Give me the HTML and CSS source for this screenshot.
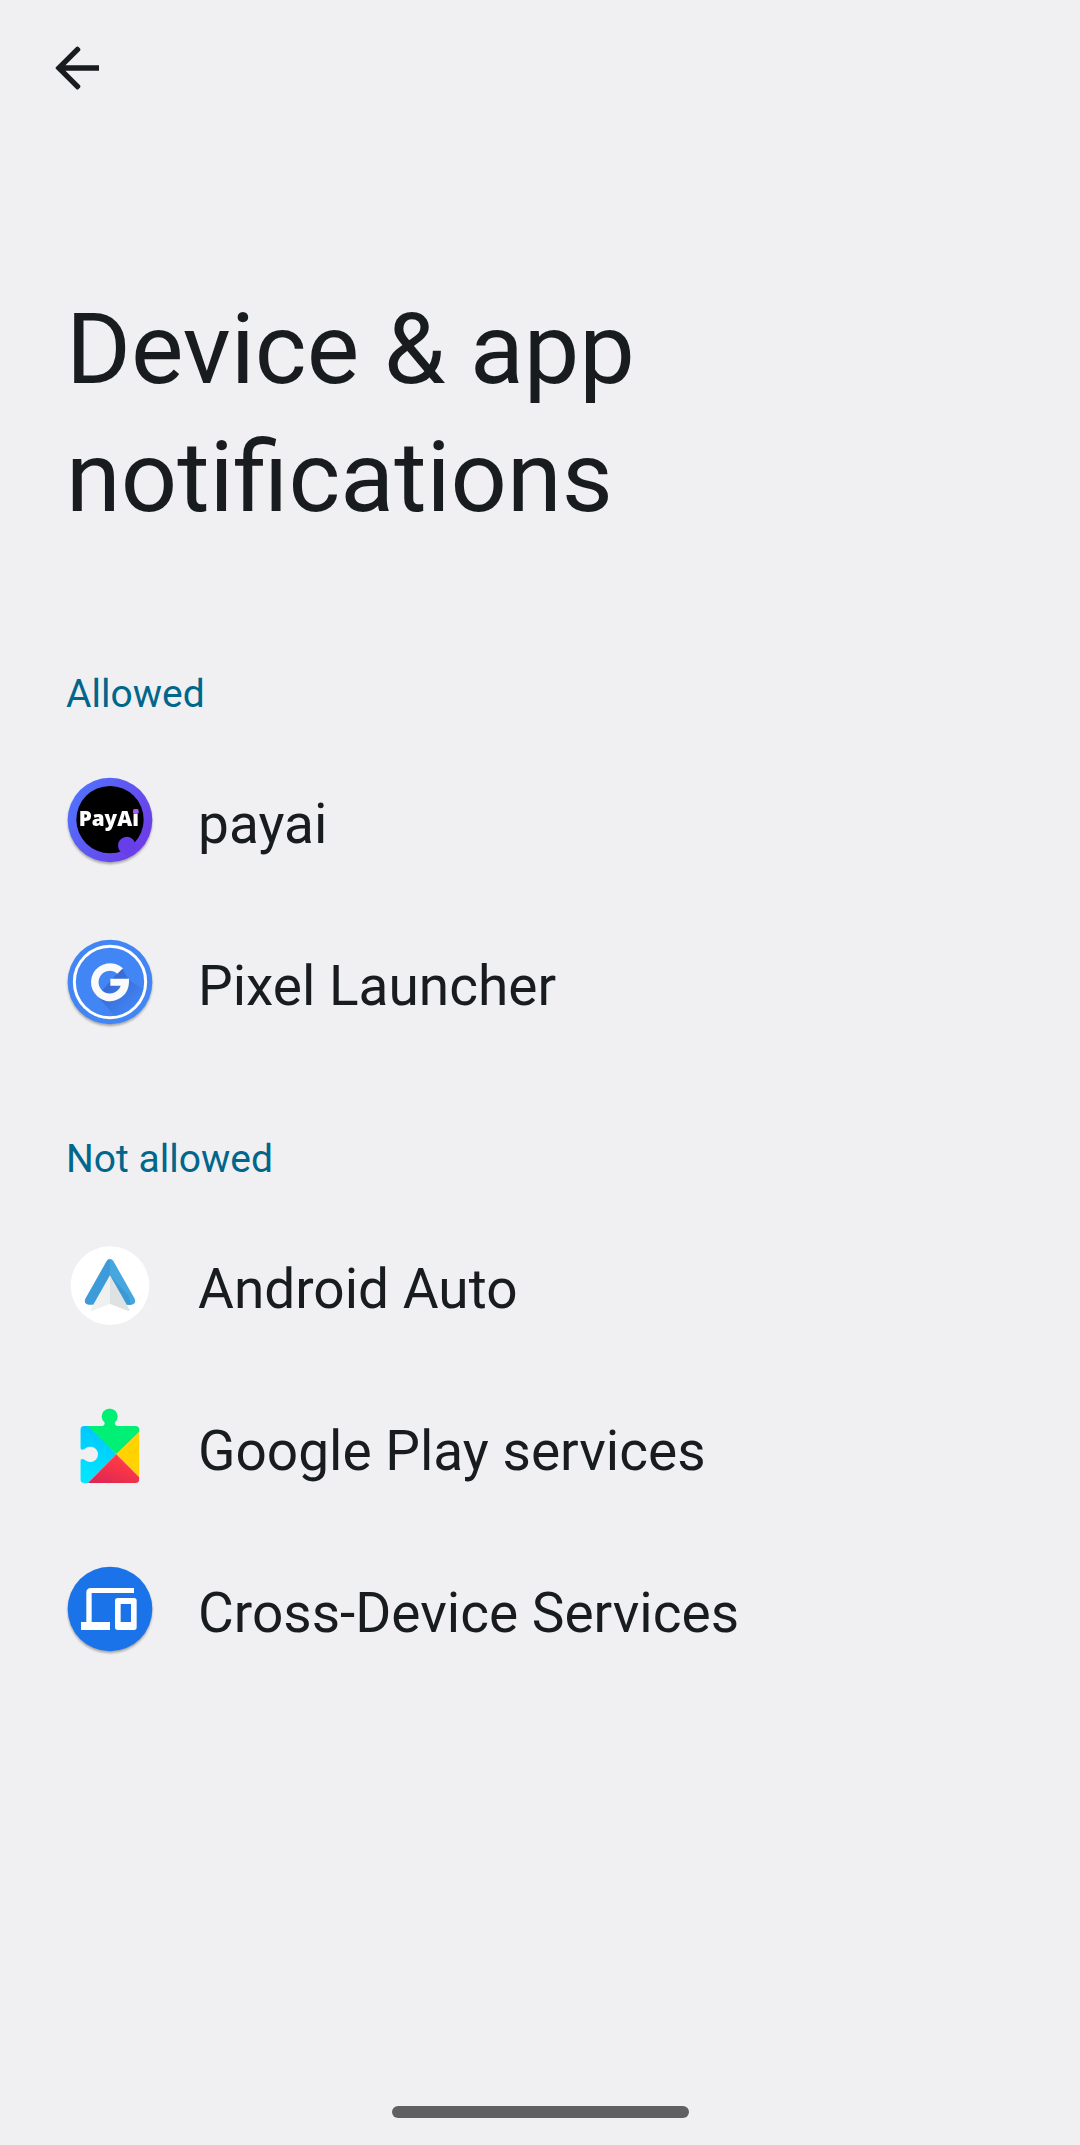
FILE: index.html
```html
<!DOCTYPE html>
<html lang="en">
<head>
  <meta charset="utf-8">
  <meta name="viewport" content="width=device-width, initial-scale=1">
  <title>Device &amp; app notifications</title>
  <link rel="stylesheet" href="styles.css">
</head>
<body>
  <div class="screen">
    <header class="top-bar">
      <button class="back" type="button" aria-label="Back">
        <svg class="back-icon" viewBox="0 0 24 24" aria-hidden="true">
          <path d="M20 11H7.8l5.3-5.3a.6.6 0 0 0 0-.8l-.5-.5a.6.6 0 0 0-.9 0L4.3 11.7a.5.5 0 0 0 0 .6l7.4 7.3a.6.6 0 0 0 .9 0l.5-.5a.6.6 0 0 0 0-.8L7.8 13H20z"/>
        </svg>
      </button>
    </header>

    <main class="content">
      <h1 class="title">Device &amp; app notifications</h1>

      <section class="group">
        <h2 class="group-title">Allowed</h2>
        <ul class="apps">
          <li>
            <a class="app" href="#payai">
              <svg class="app-icon raised" viewBox="18 18 264 264" aria-hidden="true">
                <defs>
                  <linearGradient id="payai-ring" x1="0" y1="0.2" x2="1" y2="0.8">
                    <stop offset="0" stop-color="#4f74ff"/>
                    <stop offset="1" stop-color="#6f38e6"/>
                  </linearGradient>
                </defs>
                <circle cx="150" cy="150" r="127" fill="url(#payai-ring)"/>
                <circle cx="150" cy="149" r="101" fill="#000"/>
                <path d="M184 247a26 26 0 1 1 41-28l15 8-40 30z" fill="#673fe9"/>
                <text class="payai-word" x="56" y="167">PayAi</text>
                <rect x="219" y="117" width="17" height="15" rx="5" fill="#a45cf5"/>
              </svg>
              <span class="app-name">payai</span>
            </a>
          </li>
          <li>
            <a class="app" href="#pixel-launcher">
              <svg class="app-icon raised" viewBox="18 18 264 264" aria-hidden="true">
                <defs>
                  <linearGradient id="g-shade" x1="0.2" y1="0.2" x2="0.8" y2="0.8">
                    <stop offset="0" stop-color="#3667d0"/>
                    <stop offset="1" stop-color="#4285f4"/>
                  </linearGradient>
                </defs>
                <circle cx="150" cy="150" r="127" fill="#4285f4"/>
                <path d="M186 108l-74 84 58 67a111 111 0 0 0 87-82l-51-34z" fill="url(#g-shade)"/>
                <circle cx="150" cy="150" r="107" fill="none" stroke="#fff" stroke-width="9"/>
                <path d="M189 109A57 57 0 1 0 207 150V140H151V161H182A34 34 0 1 1 172 125z" fill="#fafafa"/>
              </svg>
              <span class="app-name">Pixel Launcher</span>
            </a>
          </li>
        </ul>
      </section>

      <section class="group">
        <h2 class="group-title">Not allowed</h2>
        <ul class="apps">
          <li>
            <a class="app" href="#android-auto">
              <svg class="app-icon" viewBox="18 9 264 264" aria-hidden="true">
                <circle cx="150" cy="143" r="118" fill="#fff"/>
                <path d="M150 63q-7 0-10 6L76 182q-6 17 10 18h20l44-86z" fill="#3c9bd8"/>
                <path d="M150 63q7 0 10 6l64 113q6 17-10 18h-20l-44-86z" fill="#46a6df"/>
                <path d="M150 112l55 60 9 28h-20z" fill="#3c99d5"/>
                <path d="M150 112v86l-55 21q-4 0-3-5z" fill="#eff1f1"/>
                <path d="M150 112v86l55 21q4 0 3-5z" fill="#dfe2e2"/>
              </svg>
              <span class="app-name">Android Auto</span>
            </a>
          </li>
          <li>
            <a class="app" href="#google-play-services">
              <svg class="app-icon" viewBox="18 9 264 264" aria-hidden="true">
                <defs>
                  <clipPath id="puzzle">
                    <path d="M73 78H128Q135 76 134 68A24 24 0 1 1 164 68Q164 76 171 78H226Q238 78 238 90V237Q238 249 226 249H73Q61 249 61 237V183Q61 177 67 177Q73 177 78 182A23 23 0 1 0 78 144Q73 149 67 149Q61 149 61 143V90Q61 78 73 78Z"/>
                  </clipPath>
                  <linearGradient id="play-blue" x1="0.6" y1="0" x2="0.4" y2="1">
                    <stop offset="0" stop-color="#00c3ff"/>
                    <stop offset="1" stop-color="#00e7ff"/>
                  </linearGradient>
                  <linearGradient id="play-red" x1="0.6" y1="0.2" x2="0" y2="1">
                    <stop offset="0" stop-color="#ff3a44"/>
                    <stop offset="1" stop-color="#d92358"/>
                  </linearGradient>
                </defs>
                <g clip-path="url(#puzzle)">
                  <path d="M50 70H84L169 163L84 249H50z" fill="url(#play-blue)"/>
                  <path d="M84 78V10H240V94L169 163z" fill="#00f076"/>
                  <path d="M240 93L169 163L240 234z" fill="#ffd200"/>
                  <path d="M169 163L83 250H240V234z" fill="url(#play-red)"/>
                </g>
              </svg>
              <span class="app-name">Google Play services</span>
            </a>
          </li>
          <li>
            <a class="app" href="#cross-device-services">
              <svg class="app-icon raised" viewBox="18 15 264 264" aria-hidden="true">
                <circle cx="150" cy="147" r="127" fill="#1a73e8"/>
                <path d="M222 84V99H95V186H150V210H63V186H79V98Q79 84 93 84z" fill="#fff"/>
                <path fill-rule="evenodd" d="M173 114H222Q230 114 230 122V202Q230 210 222 210H173Q165 210 165 202V122Q165 114 173 114zM182 132V186H213V132z" fill="#fff"/>
              </svg>
              <span class="app-name">Cross-Device Services</span>
            </a>
          </li>
        </ul>
      </section>
    </main>

    <footer class="nav-bar"><div class="nav-handle"></div></footer>
  </div>
</body>
</html>
```

FILE: styles.css
```css
* {
  box-sizing: border-box;
}

body {
  margin: 0;
  background: #f0f0f3;
  color: #191c1e;
  font-family: Roboto, "Liberation Sans", sans-serif;
}

.screen {
  display: flex;
  flex-direction: column;
  min-height: 100vh;
}

.top-bar {
  display: flex;
  align-items: center;
  height: 136px;
  padding: 0 44px;
}

.back {
  display: flex;
  padding: 0;
  border: 0;
  background: none;
  color: inherit;
  cursor: pointer;
}

.back-icon {
  width: 66px;
  height: 66px;
  fill: currentColor;
}

.content {
  flex: 1;
  padding-top: 149px;
}

.title {
  max-width: 900px;
  margin: 0 0 130px;
  padding: 0 66px;
  font-size: 99px;
  font-weight: 400;
  line-height: 128px;
}

.group + .group {
  margin-top: 73px;
}

.group-title {
  margin: 0 0 22px;
  padding: 0 66px;
  color: #00668b;
  font-size: 39px;
  font-weight: 400;
  line-height: 46px;
}

.apps {
  margin: 0;
  padding: 0;
  list-style: none;
}

.app {
  display: flex;
  align-items: center;
  gap: 44px;
  min-height: 162px;
  padding: 0 66px;
  color: inherit;
  text-decoration: none;
}

.app-icon {
  flex: none;
  width: 88px;
  height: 88px;
  overflow: visible;
}

.raised {
  filter: drop-shadow(0 2px 1px rgb(0 0 0 / 30%));
}

.app-name {
  padding-top: 8px;
  font-size: 55px;
  line-height: 64px;
}

.payai-word {
  fill: #fff;
  font-family: "Open Sans", "Noto Sans", sans-serif;
  font-size: 62px;
  font-weight: 800;
}

.nav-bar {
  display: flex;
  justify-content: center;
  padding: 27px 0;
}

.nav-handle {
  width: 297px;
  height: 12px;
  border-radius: 6px;
  background: #606060;
}
```
